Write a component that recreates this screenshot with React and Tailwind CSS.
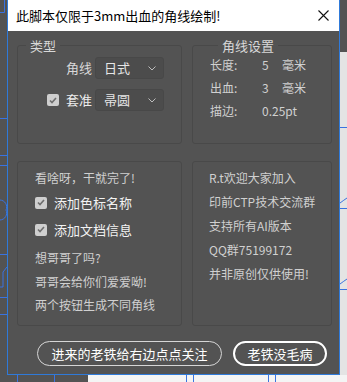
import React from 'react';

const cjk = { fontFamily: '"Noto Sans CJK SC", "Noto Sans", sans-serif' };

function Chevron() {
  return (
    <svg width="8" height="5" viewBox="0 0 8 5" className="text-[#bdbdbd]">
      <path d="M0.5 0.5 L4 4 L7.5 0.5" fill="none" stroke="currentColor" strokeWidth="1" />
    </svg>
  );
}

function Select({ value }) {
  return (
    <div className="flex h-[22px] w-[69px] items-center justify-between rounded-[3px] border border-[#484848] bg-[#4c4c4c] pl-[8px] pr-[7px] text-[13px] text-[#e6e6e6]">
      <span>{value}</span>
      <Chevron />
    </div>
  );
}

function Check() {
  return (
    <span className="flex h-[12px] w-[12px] items-center justify-center rounded-[2px] bg-[#cfcfcf]">
      <svg width="8" height="7" viewBox="0 0 8 7">
        <path d="M1 3.5 L3 5.5 L7 1" fill="none" stroke="#6e6e6e" strokeWidth="1.6" />
      </svg>
    </span>
  );
}

function Desktop() {
  return (
    <svg className="absolute inset-0" width="347" height="382" viewBox="0 0 347 382">
      <rect x="0" y="0" width="347" height="382" fill="#535353" />
      <rect x="340" y="52" width="7" height="330" fill="#e4e4e4" />
      <rect x="88" y="375" width="259" height="7" fill="#f4f4f4" />
      <g fill="none" stroke="#3a73e0" strokeWidth="1">
        <path d="M0 12.5 H4.5 V0" />
        <path d="M0 118.5 H7" />
        <path d="M0 155.5 H7 M0 165.5 H7" />
        <path d="M0 200 A7 7 0 0 1 6 210 A7 7 0 0 1 0 220" />
        <path d="M0 254.5 H7" />
        <path d="M7 267 L3 272 V287 H0 M0 297.5 H7" />
        <path d="M0 314.5 H7" />
        <path d="M340 127.5 H347" />
        <path d="M340 208.5 H347 M340 203 Q344 200 347 198" />
        <path d="M340 289.5 H347 M340 284 Q344 281 347 279" />
        <path d="M17.5 375 V382 M54.5 375 V382" />
        <path d="M186.5 375 V382 M193.5 375 V382 M268.5 375 V382 M275.5 375 V382" />
      </g>
    </svg>
  );
}

export default function App() {
  return (
    <div className="relative h-[382px] w-[347px] overflow-hidden" style={cjk}>
      <Desktop />
      <div className="absolute left-[7px] top-0 flex h-[375px] w-[333px] flex-col border-x border-b border-[#2f7ad9] bg-[#535353]">
        <div className="flex h-[31px] items-center justify-between bg-white pl-[8px] pr-[10px]">
          <span className="text-[13px] text-black">此脚本仅限于3mm出血的角线绘制!</span>
          <svg width="11" height="11" viewBox="0 0 11 11">
            <path d="M0.5 0.5 L10.5 10.5 M10.5 0.5 L0.5 10.5" stroke="#111" strokeWidth="1.1" />
          </svg>
        </div>

        <div className="flex flex-1 flex-col pl-[9px] pr-[7px] text-[12px] text-[#d0d0d0]">
          <div className="mt-[8px] flex gap-[10px]">
            <fieldset className="h-[105px] w-[165px] rounded-[3px] border border-[#494949] pr-[17px]">
              <legend className="ml-[8px] px-[4px] text-[13px] leading-[13px] text-[#d8d8d8]">类型</legend>
              <div className="mt-[5px] flex flex-col items-end gap-[10px]">
                <div className="flex items-center gap-[3px]">
                  <span className="text-[13px] text-[#d8d8d8]">角线</span>
                  <Select value="日式" />
                </div>
                <div className="flex items-center gap-[3px]">
                  <Check />
                  <span className="ml-[4px] text-[13px] text-[#ededed]">套准</span>
                  <Select value="帚圆" />
                </div>
              </div>
            </fieldset>

            <fieldset className="h-[105px] w-[140px] rounded-[3px] border border-[#494949] pl-[17px]">
              <legend className="ml-[8px] px-[4px] text-[13px] leading-[13px] text-[#d8d8d8]">角线设置</legend>
              <div className="mt-[6px] grid grid-cols-[52px_20px_auto] gap-y-[10px] leading-[13px]">
                <span>长度:</span>
                <span>5</span>
                <span>毫米</span>
                <span>出血:</span>
                <span>3</span>
                <span>毫米</span>
                <span>描边:</span>
                <span className="col-span-2">0.25pt</span>
              </div>
            </fieldset>
          </div>

          <div className="mt-[17px] flex gap-[10px]">
            <div className="flex h-[165px] w-[165px] flex-col gap-[11px] rounded-[3px] border border-[#494949] pl-[17px] pt-[9px] leading-[13px]">
              <span>看啥呀，干就完了!</span>
              <div className="mt-[1px] flex items-center gap-[7px] text-[13px] text-[#f2f2f2]">
                <Check />
                <span>添加色标名称</span>
              </div>
              <div className="mt-[3px] flex items-center gap-[7px] text-[13px] text-[#f2f2f2]">
                <Check />
                <span>添加文档信息</span>
              </div>
              <span className="mt-[4px]">想哥哥了吗?</span>
              <span>哥哥会给你们爱爱呦!</span>
              <span className="-mt-[1px]">两个按钮生成不同角线</span>
            </div>

            <div className="flex h-[165px] w-[140px] flex-col gap-[11px] rounded-[3px] border border-[#494949] pl-[16px] pt-[9px] leading-[13px]">
              <span>R.t欢迎大家加入</span>
              <span>印前CTP技术交流群</span>
              <span>支持所有AI版本</span>
              <span>QQ群75199172</span>
              <span>并非原创仅供使用!</span>
            </div>
          </div>

          <div className="mt-[15px] flex gap-[11px] pl-[20px]">
            <button className="flex h-[25px] w-[185px] items-center justify-center rounded-full border-[1.5px] border-[#d6d6d6] text-[13px] text-white">
              进来的老铁给右边点点关注
            </button>
            <button className="flex h-[25px] w-[94px] items-center justify-center rounded-full border-2 border-white text-[13px] text-white">
              老铁没毛病
            </button>
          </div>
        </div>
      </div>
    </div>
  );
}
